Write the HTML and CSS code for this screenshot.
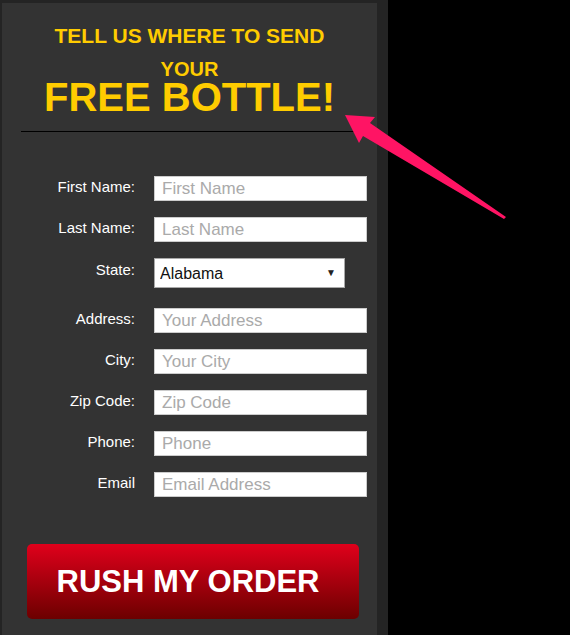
FILE: index.html
```html
<!DOCTYPE html>
<html>
  <head>
    <meta charset="UTF-8">
    <title>Free Bottle Order Form</title>
    <link rel="stylesheet" href="styles.css">
  </head>
  <body>
    <div class="page">
      <div class="panel">
        <div class="headline">
          <div class="line-small">TELL US WHERE TO SEND</div>
          <div class="line-your">YOUR</div>
          <div class="line-big">FREE BOTTLE!</div>
        </div>
        <hr class="divider">

        <form class="order-form">
          <div class="row">
            <label for="firstName">First Name:</label>
            <input type="text" id="firstName" placeholder="First Name">
          </div>
          <div class="row">
            <label for="lastName">Last Name:</label>
            <input type="text" id="lastName" placeholder="Last Name">
          </div>
          <div class="row row-state">
            <label for="state">State:</label>
            <div class="select-wrap">
              <select id="state">
                <option>Alabama</option>
                <option>Alaska</option>
                <option>Arizona</option>
              </select>
            </div>
          </div>
          <div class="row">
            <label for="address">Address:</label>
            <input type="text" id="address" placeholder="Your Address">
          </div>
          <div class="row">
            <label for="city">City:</label>
            <input type="text" id="city" placeholder="Your City">
          </div>
          <div class="row">
            <label for="zip">Zip Code:</label>
            <input type="text" id="zip" placeholder="Zip Code">
          </div>
          <div class="row">
            <label for="phone">Phone:</label>
            <input type="text" id="phone" placeholder="Phone">
          </div>
          <div class="row">
            <label for="email">Email</label>
            <input type="email" id="email" placeholder="Email Address">
          </div>

          <button type="submit" class="rush-btn">RUSH MY ORDER</button>
        </form>
      </div>
    </div>

    <svg class="arrow" width="570" height="635" viewBox="0 0 570 635">
      <polygon points="345,115 375,117 370,123 506,217 504,219 363,136 359,143" fill="#ff1464"/>
    </svg>
  </body>
</html>
```

FILE: styles.css
```css
body {
  margin: 0;
  padding: 0;
  background: #000;
  font-family: "Liberation Sans", Arial, sans-serif;
}
.page {
  width: 388px;
  height: 635px;
  background: #242424;
  overflow: hidden;
}
.panel {
  width: 375px;
  margin-left: 2px;
  margin-top: 3px;
  height: 700px;
  background: #333;
}
.headline {
  text-align: center;
  color: #ffcc00;
  font-weight: bold;
  padding-top: 21px;
}
.line-small {
  font-size: 21px;
  line-height: 24px;
}
.line-your {
  font-size: 20px;
  line-height: 20px;
  margin-top: 11px;
}
.line-big {
  font-size: 40px;
  line-height: 36px;
}
.divider {
  border: none;
  border-top: 1px solid #000;
  margin: 16px 19px 0 19px;
}
.order-form {
  padding-top: 44px;
}
.row {
  display: flex;
  align-items: flex-start;
  margin-bottom: 16px;
}
.row label {
  width: 133px;
  margin-right: 19px;
  text-align: right;
  color: #fff;
  font-size: 15px;
  line-height: 16px;
  padding-top: 3px;
}
.row input {
  box-sizing: border-box;
  width: 213px;
  height: 25px;
  border: 1px solid #ccc;
  padding: 0 7px;
  font-family: "Liberation Sans", Arial, sans-serif;
  font-size: 17px;
  color: #222;
  background: #fff;
  outline: none;
}
.row input::placeholder {
  color: #aaa;
}
.row-state {
  margin-top: 1px;
  margin-bottom: 20px;
}
.row-state label {
  padding-top: 4px;
}
.select-wrap {
  position: relative;
}
.select-wrap select {
  -webkit-appearance: none;
  appearance: none;
  box-sizing: border-box;
  width: 191px;
  height: 30px;
  border: 1px solid #a9a9a9;
  border-radius: 0;
  padding: 0 5px;
  font-family: "Liberation Sans", Arial, sans-serif;
  font-size: 16px;
  color: #111;
  background: #fff;
}
.select-wrap::after {
  content: "\25BC";
  position: absolute;
  right: 9px;
  top: 9px;
  font-size: 10px;
  color: #222;
  pointer-events: none;
}
/* row margin collapses into this one, so it carries the whole gap */
.rush-btn {
  display: block;
  margin: 47px 0 0 25px;
  width: 332px;
  height: 75px;
  border: none;
  border-radius: 5px;
  background: linear-gradient(#e0001b, #6c0000);
  color: #fff;
  font-family: "Liberation Sans", Arial, sans-serif;
  font-weight: bold;
  font-size: 31px;
  padding: 0 10px 0 0;
  cursor: pointer;
}
.arrow {
  position: absolute;
  left: 0;
  top: 0;
  pointer-events: none;
}
```
